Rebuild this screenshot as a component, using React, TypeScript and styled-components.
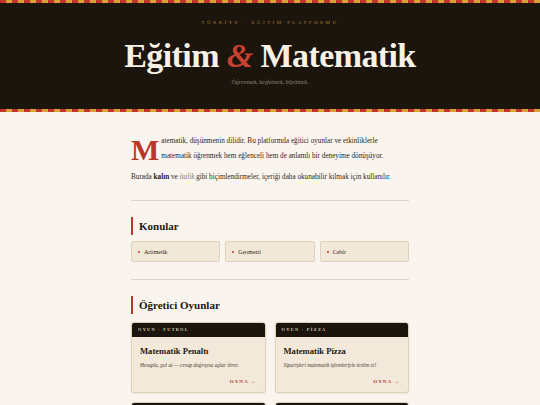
import React from 'react';
import styled, { createGlobalStyle } from 'styled-components';

const GlobalStyle = createGlobalStyle`
  html, body {
    margin: 0;
    padding: 0;
    background: #f9f5ee;
  }
  body {
    font-family: "Liberation Serif", "DejaVu Serif", serif;
    color: #2a2118;
  }
`;

const topics = ['Aritmetik', 'Geometri', 'Cebir'];

const games = [
  { tag: 'OYUN · FUTBOL', title: 'Matematik Penaltı', text: 'Hesapla, gol at — cevap doğruysa ağlar titrer.' },
  { tag: 'OYUN · PİZZA', title: 'Matematik Pizza', text: 'Siparişleri matematik işlemleriyle teslim et!' },
  { tag: 'OYUN · BULMACA', title: 'Sayı Bulmacası', text: 'Eksik sayıları bul, bulmacayı tamamla.' },
  { tag: 'OYUN · YARIŞ', title: 'Hızlı Hesap', text: 'Zamana karşı yarış, en hızlı sen ol!' },
];

export default function App() {
  return (
    <>
      <GlobalStyle />
      <Hero>
        <Stripe />
        <HeroInner>
          <Kicker>TÜRKİYE · EĞİTİM PLATFORMU</Kicker>
          <Title>
            Eğitim <Amp>&amp;</Amp> Matematik
          </Title>
          <Tagline>Öğrenmek, keşfetmek, büyümek.</Tagline>
        </HeroInner>
        <Stripe />
      </Hero>

      <Main>
        <Intro>
          <DropCap>M</DropCap>atematik, düşünmenin dilidir. Bu platformda eğitici oyunlar ve etkinliklerle
          matematik öğrenmek hem eğlenceli hem de anlamlı bir deneyime dönüşüyor.
        </Intro>
        <Para>
          Burada <Strong>kalın</Strong> ve <Muted>italik</Muted> gibi biçimlendirmeler, içeriği daha okunabilir kılmak için kullanılır.
        </Para>

        <Rule />

        <Section>
          <Heading>Konular</Heading>
          <Chips>
            {topics.map((t) => (
              <Chip key={t}>{t}</Chip>
            ))}
          </Chips>
        </Section>

        <Rule />

        <Section>
          <Heading>Öğretici Oyunlar</Heading>
          <Cards>
            {games.map((g) => (
              <Card key={g.title}>
                <CardTag>{g.tag}</CardTag>
                <CardBody>
                  <CardTitle>{g.title}</CardTitle>
                  <CardText>{g.text}</CardText>
                  <Play>OYNA →</Play>
                </CardBody>
              </Card>
            ))}
          </Cards>
        </Section>
      </Main>
    </>
  );
}

const Hero = styled.header`
  background: #1b150d;
  display: flex;
  flex-direction: column;
`;

const Stripe = styled.div`
  height: 3px;
  background: repeating-linear-gradient(
    90deg,
    #c2352a 0 6px,
    #d9a03a 6px 12px
  );
`;

const HeroInner = styled.div`
  display: flex;
  flex-direction: column;
  align-items: center;
  padding: 17px 0 24px;
`;

const Kicker = styled.div`
  font-size: 5px;
  letter-spacing: 2.4px;
  color: #a57c3a;
  line-height: 6px;
`;

const Title = styled.h1`
  margin: 12px 0 0;
  font-size: 34px;
  line-height: 36px;
  font-weight: 700;
  color: #f7f1e6;
  letter-spacing: -0.6px;
`;

const Amp = styled.span`
  color: #c9402f;
  font-style: italic;
`;

const Tagline = styled.div`
  margin-top: 5px;
  font-size: 6px;
  font-style: italic;
  color: #8f867a;
`;

const Main = styled.main`
  width: 278px;
  margin: 0 auto;
  padding: 22px 0 0;
`;

const Intro = styled.p`
  margin: 0;
  font-size: 7.2px;
  line-height: 15px;
  color: #2f251b;
`;

const DropCap = styled.span`
  float: left;
  font-size: 30px;
  line-height: 24px;
  font-weight: 700;
  color: #b8362a;
  margin: 4px 2px 0 0;
`;

const Para = styled.p`
  margin: 7px 0 0;
  font-size: 7.2px;
  line-height: 12px;
  color: #2f251b;
`;

const Strong = styled.b`
  color: #1e1810;
`;

const Muted = styled.i`
  color: #8a7b68;
`;

const Rule = styled.hr`
  border: none;
  border-top: 1px solid #e0d6c6;
  margin: 17px 0 0;
`;

const Section = styled.section`
  padding-top: 16px;
`;

const Heading = styled.h2`
  margin: 0;
  border-left: 2px solid #b8362a;
  padding-left: 6px;
  font-size: 11px;
  line-height: 18px;
  font-weight: 700;
  color: #1e1810;
`;

const Chips = styled.div`
  display: grid;
  grid-template-columns: repeat(3, 1fr);
  gap: 5px;
  margin-top: 6px;
`;

const Chip = styled.div`
  display: flex;
  align-items: center;
  gap: 4px;
  height: 19px;
  padding: 0 6px;
  background: #f2e8d8;
  border: 1px solid #e0d3bd;
  border-radius: 2px;
  font-size: 6px;
  color: #2f251b;

  &::before {
    content: '';
    width: 2px;
    height: 2px;
    border-radius: 50%;
    background: #b8362a;
  }
`;

const Cards = styled.div`
  display: grid;
  grid-template-columns: 1fr 1fr;
  gap: 9px;
  margin-top: 8px;
`;

const Card = styled.article`
  background: #f3e9da;
  border: 1px solid #ddd0bb;
  border-radius: 3px;
  overflow: hidden;
  box-shadow: 0 1px 2px rgba(60, 40, 20, 0.08);
`;

const CardTag = styled.div`
  background: #1b150d;
  color: #d8cdbb;
  font-size: 4.3px;
  letter-spacing: 1.3px;
  font-weight: 700;
  height: 14px;
  line-height: 14px;
  padding: 0 6px;
`;

const CardBody = styled.div`
  display: flex;
  flex-direction: column;
  padding: 8px 8px 8px;
`;

const CardTitle = styled.h3`
  margin: 0;
  font-size: 8.6px;
  line-height: 13px;
  font-weight: 700;
  color: #1e1810;
`;

const CardText = styled.p`
  margin: 3px 0 0;
  font-size: 5.3px;
  line-height: 8px;
  font-style: italic;
  color: #4a3e32;
`;

const Play = styled.div`
  align-self: flex-end;
  margin: 10px 0 0;
  font-size: 5px;
  letter-spacing: 1px;
  font-weight: 700;
  color: #b8362a;
`;
